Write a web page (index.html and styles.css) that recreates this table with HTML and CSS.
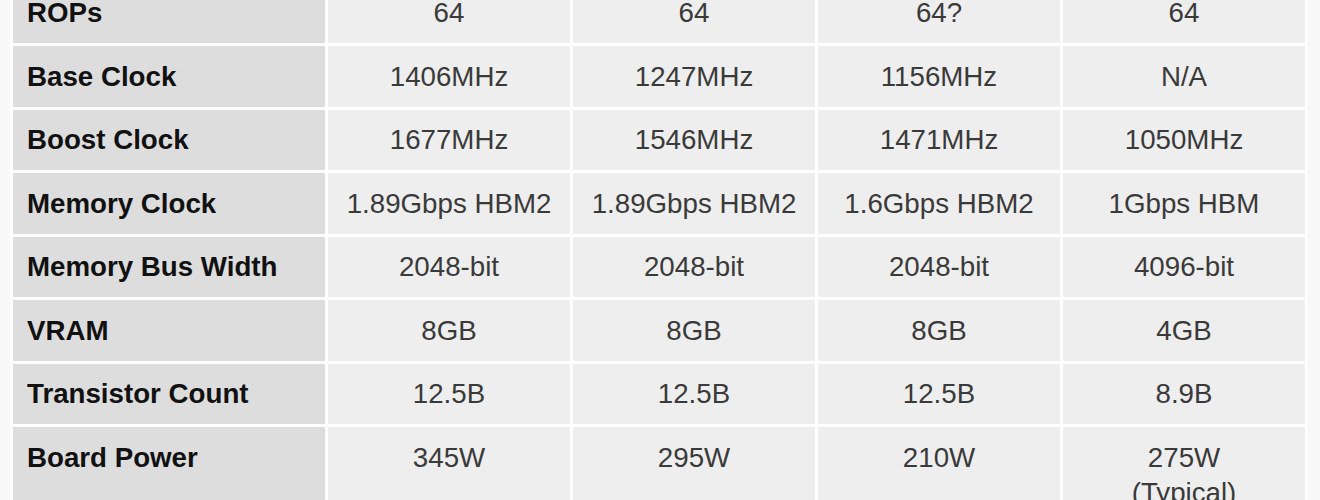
FILE: index.html
```html
<!DOCTYPE html>
<html lang="en">
<head>
<meta charset="utf-8">
<title>GPU Specs</title>
<link rel="stylesheet" href="styles.css">
</head>
<body>
<table class="specs">
  <colgroup>
    <col class="col-label">
    <col><col><col><col>
  </colgroup>
  <tbody>
    <tr><th>ROPs</th><td>64</td><td>64</td><td>64?</td><td>64</td></tr>
    <tr><th>Base Clock</th><td>1406MHz</td><td>1247MHz</td><td>1156MHz</td><td>N/A</td></tr>
    <tr><th>Boost Clock</th><td>1677MHz</td><td>1546MHz</td><td>1471MHz</td><td>1050MHz</td></tr>
    <tr><th>Memory Clock</th><td>1.89Gbps HBM2</td><td>1.89Gbps HBM2</td><td>1.6Gbps HBM2</td><td>1Gbps HBM</td></tr>
    <tr><th>Memory Bus Width</th><td>2048-bit</td><td>2048-bit</td><td>2048-bit</td><td>4096-bit</td></tr>
    <tr><th>VRAM</th><td>8GB</td><td>8GB</td><td>8GB</td><td>4GB</td></tr>
    <tr><th>Transistor Count</th><td>12.5B</td><td>12.5B</td><td>12.5B</td><td>8.9B</td></tr>
    <tr><th>Board Power</th><td>345W</td><td>295W</td><td>210W</td><td>275W<br>(Typical)</td></tr>
  </tbody>
</table>
</body>
</html>
```
FILE: styles.css
```css
html, body {
  margin: 0;
  padding: 0;
  background: #f8f8f8;
}

body {
  padding-left: 10px;
  font-family: "Liberation Sans", Arial, sans-serif;
  overflow: hidden;
}

.specs {
  margin-top: -20.5px;
  width: 1298px;
  table-layout: fixed;
  border-collapse: separate;
  border-spacing: 3px;
  background: #ffffff;
  font-size: 27.7px;
  line-height: 35px;
}

.col-label {
  width: 312px;
}

.specs th,
.specs td {
  padding: 12.75px 8px;
  vertical-align: top;
}

.specs th {
  background: #dddddd;
  color: #111111;
  font-weight: bold;
  text-align: left;
  padding-left: 14px;
}

.specs td {
  background: #eeeeee;
  color: #3a3a3a;
  text-align: center;
}
```
